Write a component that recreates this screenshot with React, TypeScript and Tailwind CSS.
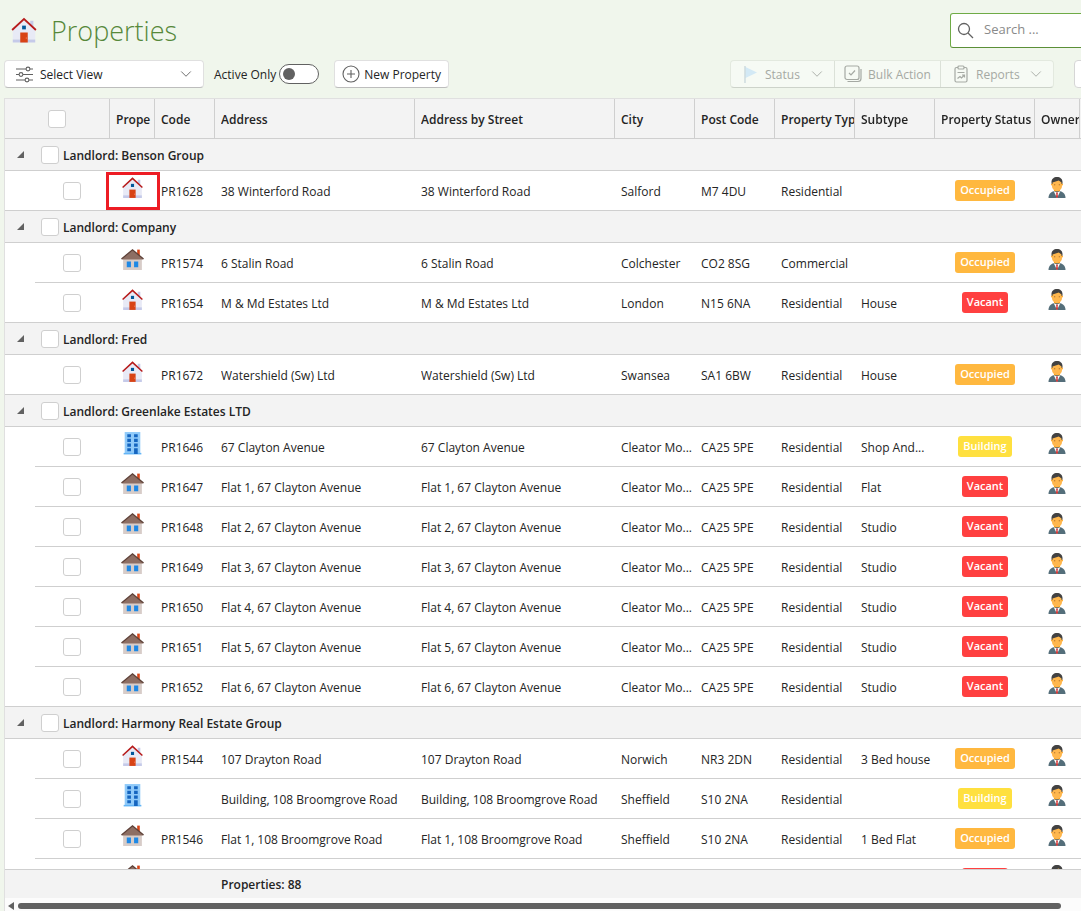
import type { ReactNode } from 'react';
import { ChevronDown } from 'lucide-react';

type Kind = 'home' | 'flat' | 'building';
type Status = 'Occupied' | 'Vacant' | 'Building';

interface Property {
  code: string;
  kind: Kind;
  address: string;
  city: string;
  postCode: string;
  type: string;
  subtype: string;
  status: Status;
  highlighted?: boolean;
}

interface LandlordGroup {
  landlord: string;
  properties: Property[];
}

const clayton = (code: string, flat: number, subtype: string): Property => ({
  code,
  kind: 'flat',
  address: `Flat ${flat}, 67 Clayton Avenue`,
  city: 'Cleator Mo...',
  postCode: 'CA25 5PE',
  type: 'Residential',
  subtype,
  status: 'Vacant',
});

const groups: LandlordGroup[] = [
  {
    landlord: 'Benson Group',
    properties: [
      { code: 'PR1628', kind: 'home', address: '38 Winterford Road', city: 'Salford', postCode: 'M7 4DU', type: 'Residential', subtype: '', status: 'Occupied', highlighted: true },
    ],
  },
  {
    landlord: 'Company',
    properties: [
      { code: 'PR1574', kind: 'flat', address: '6 Stalin Road', city: 'Colchester', postCode: 'CO2 8SG', type: 'Commercial', subtype: '', status: 'Occupied' },
      { code: 'PR1654', kind: 'home', address: 'M & Md Estates Ltd', city: 'London', postCode: 'N15 6NA', type: 'Residential', subtype: 'House', status: 'Vacant' },
    ],
  },
  {
    landlord: 'Fred',
    properties: [
      { code: 'PR1672', kind: 'home', address: 'Watershield (Sw) Ltd', city: 'Swansea', postCode: 'SA1 6BW', type: 'Residential', subtype: 'House', status: 'Occupied' },
    ],
  },
  {
    landlord: 'Greenlake Estates LTD',
    properties: [
      { code: 'PR1646', kind: 'building', address: '67 Clayton Avenue', city: 'Cleator Mo...', postCode: 'CA25 5PE', type: 'Residential', subtype: 'Shop And...', status: 'Building' },
      clayton('PR1647', 1, 'Flat'),
      clayton('PR1648', 2, 'Studio'),
      clayton('PR1649', 3, 'Studio'),
      clayton('PR1650', 4, 'Studio'),
      clayton('PR1651', 5, 'Studio'),
      clayton('PR1652', 6, 'Studio'),
    ],
  },
  {
    landlord: 'Harmony Real Estate Group',
    properties: [
      { code: 'PR1544', kind: 'home', address: '107 Drayton Road', city: 'Norwich', postCode: 'NR3 2DN', type: 'Residential', subtype: '3 Bed house', status: 'Occupied' },
      { code: '', kind: 'building', address: 'Building, 108 Broomgrove Road', city: 'Sheffield', postCode: 'S10 2NA', type: 'Residential', subtype: '', status: 'Building' },
      { code: 'PR1546', kind: 'flat', address: 'Flat 1, 108 Broomgrove Road', city: 'Sheffield', postCode: 'S10 2NA', type: 'Residential', subtype: '1 Bed Flat', status: 'Occupied' },
      { code: '', kind: 'flat', address: '', city: '', postCode: '', type: '', subtype: '', status: 'Vacant' },
    ],
  },
];

const headers = [
  'Prope',
  'Code',
  'Address',
  'Address by Street',
  'City',
  'Post Code',
  'Property Typ',
  'Subtype',
  'Property Status',
  'Owner',
];

const statusColors: Record<Status, string> = {
  Occupied: 'bg-[#ffb83f]',
  Vacant: 'bg-[#ff4040]',
  Building: 'bg-[#ffe03f]',
};

function HomeIcon({ className }: { className: string }) {
  return (
    <svg viewBox="0 0 48 48" className={className} aria-hidden="true">
      <path fill="#E8EAF6" d="M42 39H6V23L24 6l18 17z" />
      <path fill="#C5CAE9" d="M39 21l-5-5V9h5zM6 39h36v5H6z" />
      <path fill="#B71C1C" d="M24 4.3L4 22.9l2 2.2L24 8.4l18 16.7 2-2.2z" />
      <path fill="#D84315" d="M18 28h12v16H18z" />
      <path fill="#01579B" d="M21 17h6v6h-6z" />
      <path fill="#FF8A65" d="M27 35.5h1v3h-1z" />
    </svg>
  );
}

function FlatIcon({ className }: { className: string }) {
  return (
    <svg viewBox="0 0 48 48" className={className} aria-hidden="true">
      <path fill="#D84315" d="M33 5h5v12h-5z" />
      <path fill="#D7CCC8" d="M6 22L24 7l18 15v22H6z" />
      <path fill="#8D6E63" d="M24 6L4 22v2h40v-2z" />
      <path fill="#5D4037" d="M24 4L2 22l1.500 2L24 7l20.500 17L46 22z" />
      <path fill="#1E88E5" d="M13 28h8v11h-8zM27 28h8v11h-8z" />
    </svg>
  );
}

function BuildingIcon({ className }: { className: string }) {
  return (
    <svg viewBox="0 0 48 48" className={className} aria-hidden="true">
      <path fill="#90CAF9" d="M9 2h30v42H9z" />
      <path fill="#64B5F6" d="M7 42h34v3H7z" />
      <path
        fill="#1565C0"
        d="M14 6h7v6h-7zM27 6h7v6h-7zM14 15h7v6h-7zM27 15h7v6h-7zM14 24h7v6h-7zM27 24h7v6h-7zM14 33h7v6h-7zM27 33h7v11h-7z"
      />
    </svg>
  );
}

function OwnerIcon() {
  return (
    <svg viewBox="0 0 48 48" className="mx-auto size-6" aria-label="Owner" role="img">
      <path fill="#FF9800" d="M18 25h12v9H18z" />
      <circle fill="#FFA726" cx="34" cy="17" r="2" />
      <circle fill="#FFA726" cx="14" cy="17" r="2" />
      <path fill="#FFB74D" d="M34 12c0-8-20-6-20 0v8c0 5.500 4.500 10 10 10s10-4.500 10-10z" />
      <path fill="#424242" d="M24 2C17.500 2 13 6 13 12v3l2 1.500V13l12.500-4 5.500 4v3.500l2-1.500v-3C35 6 30.500 2 24 2z" />
      <circle fill="#784719" cx="28.500" cy="17.500" r="1" />
      <circle fill="#784719" cx="19.500" cy="17.500" r="1" />
      <path fill="#546E7A" d="M31 30.500c4 1.500 10 4.500 10 13.500H7c0-9 6-12 10-13.500z" />
      <path fill="#fff" d="M17.500 30.500L24 44l6.500-13.500L24 33z" />
      <path fill="#D32F2F" d="M22 34l2-1.500 2 1.500-.800 2 .800 6-2 2-2-2 .800-6z" />
    </svg>
  );
}

function PropertyIcon({ kind }: { kind: Kind }) {
  if (kind === 'home') return <HomeIcon className="mx-auto size-[25px]" />;
  if (kind === 'flat') return <FlatIcon className="mx-auto size-[25px]" />;
  return <BuildingIcon className="mx-auto size-[25px]" />;
}

function CheckBox({ label }: { label: string }) {
  return (
    <input
      type="checkbox"
      aria-label={label}
      className="block size-[18px] shrink-0 appearance-none rounded-[3px] border border-[#cfcfcf] bg-white checked:bg-[#5b9a34]"
    />
  );
}

function Cell({ children }: { children?: ReactNode }) {
  return (
    <td className="border-b border-[#cfcfcf] pl-1.5 pt-0.5">
      <div className="overflow-hidden whitespace-nowrap">{children}</div>
    </td>
  );
}

function PropertyRow({ property, last }: { property: Property; last: boolean }) {
  return (
    <tr className="h-10">
      <td className={last ? 'border-b border-[#cfcfcf]' : ''} />
      <td className="border-b border-[#cfcfcf] pr-px">
        <div className="flex justify-center">
          <CheckBox label={`Select ${property.address}`} />
        </div>
      </td>
      <td className="relative border-b border-[#cfcfcf] pb-1.5">
        <PropertyIcon kind={property.kind} />
        {property.highlighted && (
          <span className="pointer-events-none absolute -left-1 -right-[5px] bottom-0 top-px border-3 border-[#ed1c24]" />
        )}
      </td>
      <Cell>{property.code}</Cell>
      <Cell>{property.address}</Cell>
      <Cell>{property.address}</Cell>
      <Cell>{property.city}</Cell>
      <Cell>{property.postCode}</Cell>
      <Cell>{property.type}</Cell>
      <Cell>{property.subtype}</Cell>
      <td className="border-b border-[#cfcfcf]">
        <div className="flex justify-center">
          <span className={`rounded-[3px] px-[5px] pb-0.5 pt-px text-[11px] font-semibold leading-[18px] text-white ${statusColors[property.status]}`}>
            {property.status}
          </span>
        </div>
      </td>
      <td className="border-b border-[#cfcfcf] pb-1.5 pr-px">
        <OwnerIcon />
      </td>
      <td className="border-b border-[#cfcfcf]" />
    </tr>
  );
}

function GroupRows({ group }: { group: LandlordGroup }) {
  return (
    <tbody>
      <tr className="h-8 bg-[#f3f3f3]">
        <td colSpan={13} className="border-b border-[#cfcfcf]">
          <div className="flex items-center pl-[11px]">
            <button type="button" aria-label={`Collapse ${group.landlord}`} className="mr-4 size-[9px]">
              <svg viewBox="0 0 9 9" className="size-[9px]">
                <path d="M8 1v7H1z" fill="#616161" />
              </svg>
            </button>
            <CheckBox label={`Select ${group.landlord}`} />
            <span className="ml-1 pt-0.5 font-semibold">Landlord: {group.landlord}</span>
          </div>
        </td>
      </tr>
      {group.properties.map((property, i) => (
        <PropertyRow key={i} property={property} last={i === group.properties.length - 1} />
      ))}
    </tbody>
  );
}

function PropertiesTable() {
  return (
    <div className="min-h-0 flex-1 overflow-auto [scrollbar-width:none]">
      <table className="w-full table-fixed border-separate border-spacing-0 text-left text-xs">
        <colgroup>
          <col className="w-[30px]" />
          <col className="w-[75px]" />
          <col className="w-[45px]" />
          <col className="w-[60px]" />
          <col className="w-[200px]" />
          <col className="w-[200px]" />
          <col className="w-20" />
          <col className="w-20" />
          <col className="w-20" />
          <col className="w-20" />
          <col className="w-[100px]" />
          <col className="w-[45px]" />
          <col />
        </colgroup>
        <thead className="sticky top-0 z-10 bg-[#f3f3f3]">
          <tr className="h-10">
            <th colSpan={2} className="border-b border-r border-[#cfcfcf]">
              <div className="flex justify-center">
                <CheckBox label="Select all" />
              </div>
            </th>
            {headers.map((header) => (
              <th key={header} className="border-b border-r border-[#cfcfcf] pl-1.5 pt-0.5 font-semibold">
                <div className="overflow-hidden whitespace-nowrap">{header}</div>
              </th>
            ))}
            <th className="border-b border-[#cfcfcf]" />
          </tr>
        </thead>
        {groups.map((group) => (
          <GroupRows key={group.landlord} group={group} />
        ))}
        <tfoot className="sticky bottom-0 z-10 bg-[#f3f3f3]">
          <tr className="h-[29px]">
            <td colSpan={4} className="border-t border-[#cfcfcf]" />
            <td colSpan={9} className="border-t border-[#cfcfcf] pl-1.5 pt-0.5 font-semibold">
              Properties: 88
            </td>
          </tr>
        </tfoot>
      </table>
    </div>
  );
}

function Header() {
  return (
    <header className="flex h-[60px] items-center justify-between pl-[9px]">
      <div className="flex items-center gap-3">
        <HomeIcon className="size-[30px]" />
        <h1 className="pt-0.5 text-[27px] font-light leading-9 text-[#56883a]">Properties</h1>
      </div>
      <label className="-mr-1 flex h-[35px] w-[135px] items-center gap-2.5 rounded-[3px] border border-[#6fab46] border-b-[#5b8f38] bg-white pl-1.5 text-[#616161]">
        <svg viewBox="0 0 17 17" className="size-[17px] shrink-0" fill="none" stroke="currentColor" strokeWidth="1.3">
          <circle cx="7" cy="7" r="5.500" />
          <path d="M11 11l5 5" />
        </svg>
        <input
          type="search"
          aria-label="Search"
          placeholder="Search ..."
          className="w-full min-w-0 bg-transparent text-[13px] outline-none placeholder:text-[#8a8a8a]"
        />
      </label>
    </header>
  );
}

function Toolbar() {
  return (
    <div className="flex h-7 shrink-0 items-center justify-between overflow-hidden pl-1 text-xs">
      <div className="flex items-center">
        <div className="flex h-7 w-[200px] items-center rounded border border-[#e0e0e0] border-b-[#bdbdbd] bg-white pl-[11px] pr-2">
          <svg viewBox="0 0 17 16" className="mr-[7px] size-[17px] shrink-0" fill="none" stroke="#616161" strokeWidth="1.1">
            <path d="M0 2.500h10M14 2.500h3M0 8h3M7 8h10M0 13.500h9M13 13.500h4" />
            <circle cx="12" cy="2.500" r="1.900" />
            <circle cx="5" cy="8" r="1.900" />
            <circle cx="11" cy="13.500" r="1.900" />
          </svg>
          <select aria-label="View" className="min-w-0 flex-1 appearance-none bg-transparent pt-0.5 outline-none">
            <option>Select View</option>
          </select>
          <ChevronDown size={18} strokeWidth={1.2} className="pointer-events-none text-[#616161]" />
        </div>
        <label className="ml-2.5 flex items-center gap-[3px]">
          <span className="pt-0.5">Active Only</span>
          <input
            type="checkbox"
            role="switch"
            className="h-5 w-10 appearance-none rounded-full border border-[#616161] bg-white px-[3px] py-[3px] before:block before:size-3 before:rounded-full before:bg-[#616161] checked:before:ml-5"
          />
        </label>
        <button type="button" className="ml-[15px] flex h-7 items-center gap-1 whitespace-nowrap rounded border border-[#e0e0e0] border-b-[#bdbdbd] bg-white px-[7px]">
          <svg viewBox="0 0 18 18" className="size-[18px]" fill="none" stroke="#616161" strokeWidth="1.1">
            <circle cx="9" cy="9" r="8" />
            <path d="M9 5v8M5 9h8" />
          </svg>
          <span className="pt-0.5">New Property</span>
        </button>
      </div>

      <div className="-mr-[21px] flex shrink-0 items-center gap-5">
        <div className="flex h-7 divide-x divide-[#dbe1d8] rounded border border-[#e3e9df] border-b-[#cdd3ca] bg-[#f6faf4] text-[#a5a9a3]">
          <button type="button" disabled className="flex w-[104px] items-center pl-[13px]">
            <svg viewBox="0 0 13 17" className="mr-2 h-[17px] w-[13px]">
              <path d="M1.500 1L13 6.500 1.500 12z" fill="#d3e9f5" />
              <path d="M1 0v17" stroke="#b9cbd3" />
            </svg>
            <span className="pt-0.5">Status</span>
            <ChevronDown size={18} strokeWidth={1.2} className="ml-auto mr-2" />
          </button>
          <button type="button" disabled className="flex w-[106px] items-center justify-center gap-1.5 whitespace-nowrap">
            <svg viewBox="0 0 18 18" className="size-[18px]" fill="none" stroke="currentColor" strokeWidth="1.2">
              <rect x="1" y="1" width="14" height="13.500" rx="2" />
              <path d="M5 8l2 2 4-4.500M3.500 16.500h10.500a3 3 0 0 0 3-3V4" />
            </svg>
            <span className="pt-0.5">Bulk Action</span>
          </button>
          <button type="button" disabled className="flex w-28 items-center pl-[13px]">
            <svg viewBox="0 0 14 18" className="mr-2 h-[18px] w-[14px]" fill="none" stroke="currentColor" strokeWidth="1.2">
              <path d="M4 2.500H2.500a1.500 1.500 0 0 0-1.500 1.500v11.500A1.500 1.500 0 0 0 2.500 17h9a1.500 1.500 0 0 0 1.500-1.500V4a1.500 1.500 0 0 0-1.500-1.500H10" />
              <rect x="4" y="1" width="6" height="3" rx="1" />
              <path d="M3.500 7.500h7M3.500 13.500l2.500-2 1.500 1.500 3-3M8 10h2.500v2.500" />
            </svg>
            <span className="pt-0.5">Reports</span>
            <ChevronDown size={18} strokeWidth={1.2} className="ml-auto mr-2" />
          </button>
        </div>
        <button type="button" aria-label="More" className="flex h-7 w-7 items-center justify-center rounded border border-[#d6d6d6] bg-white">
          <svg viewBox="0 0 16 4" className="w-4" fill="#616161">
            <circle cx="2" cy="2" r="1" />
            <circle cx="8" cy="2" r="1" />
            <circle cx="14" cy="2" r="1" />
          </svg>
        </button>
      </div>
    </div>
  );
}

export default function App() {
  return (
    <div className="flex h-screen flex-col overflow-hidden bg-[#f0f6ec] font-['Open_Sans','Noto_Sans',sans-serif] text-[#242424]">
      <Header />
      <Toolbar />
      <main className="ml-1 mt-2.5 flex min-h-0 flex-1 flex-col border-l border-t border-[#e0e0e0] bg-white">
        <PropertiesTable />
        {/* Horizontal scroll track */}
        <div className="flex h-[13px] shrink-0 items-center gap-1 bg-[#fcfcfc] pl-[3px] pr-5 pt-0.5">
          <svg viewBox="0 0 6 8" className="h-2 w-1.5">
            <path d="M6 0v8L0 4z" fill="#616161" />
          </svg>
          <div className="h-1.5 flex-1 rounded-full bg-[#616161]" />
        </div>
      </main>
    </div>
  );
}
